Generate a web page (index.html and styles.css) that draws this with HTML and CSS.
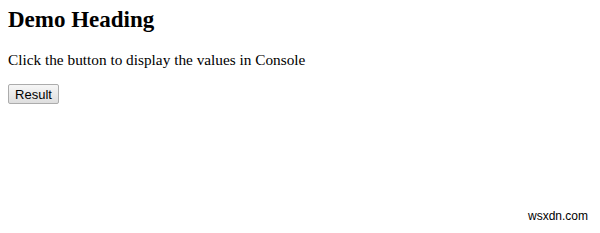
FILE: index.html
```html
<!DOCTYPE html>
<html lang="en">
<head>
    <meta charset="UTF-8">
    <meta name="viewport" content="width=device-width, initial-scale=1.0">
    <title>Demo</title>
    <link rel="stylesheet" href="styles.css">
</head>
<body>
    <h2 class="heading">Demo Heading</h2>
    <p class="info">Click the button to display the values in Console</p>
    <button class="result-btn" type="button">Result</button>

    <div class="watermark">wsxdn.com</div>
</body>
</html>
```

FILE: styles.css
```css
body {
    margin: 0;
    padding: 0 8px;
    height: 233px;
    background-color: #fff;
    font-family: "Liberation Serif", "Times New Roman", serif;
    color: #000;
    overflow: hidden;
    position: relative;
}

.heading {
    margin: 7px 0 0;
    font-size: 23px;
    font-weight: bold;
}

.info {
    margin: 18px 0 15px;
    font-size: 15.3px;
}

.result-btn {
    display: block;
    width: 51px;
    height: 20px;
    padding: 0;
    font-family: "Liberation Sans", Arial, sans-serif;
    font-size: 13px;
    color: #000;
    background: linear-gradient(#f6f6f6, #dedede);
    border: 1px solid #acacac;
    border-radius: 2px;
}

.watermark {
    position: absolute;
    right: 12px;
    bottom: 10px;
    font-family: "Liberation Sans", Arial, sans-serif;
    font-size: 12px;
    color: #000;
}
```
